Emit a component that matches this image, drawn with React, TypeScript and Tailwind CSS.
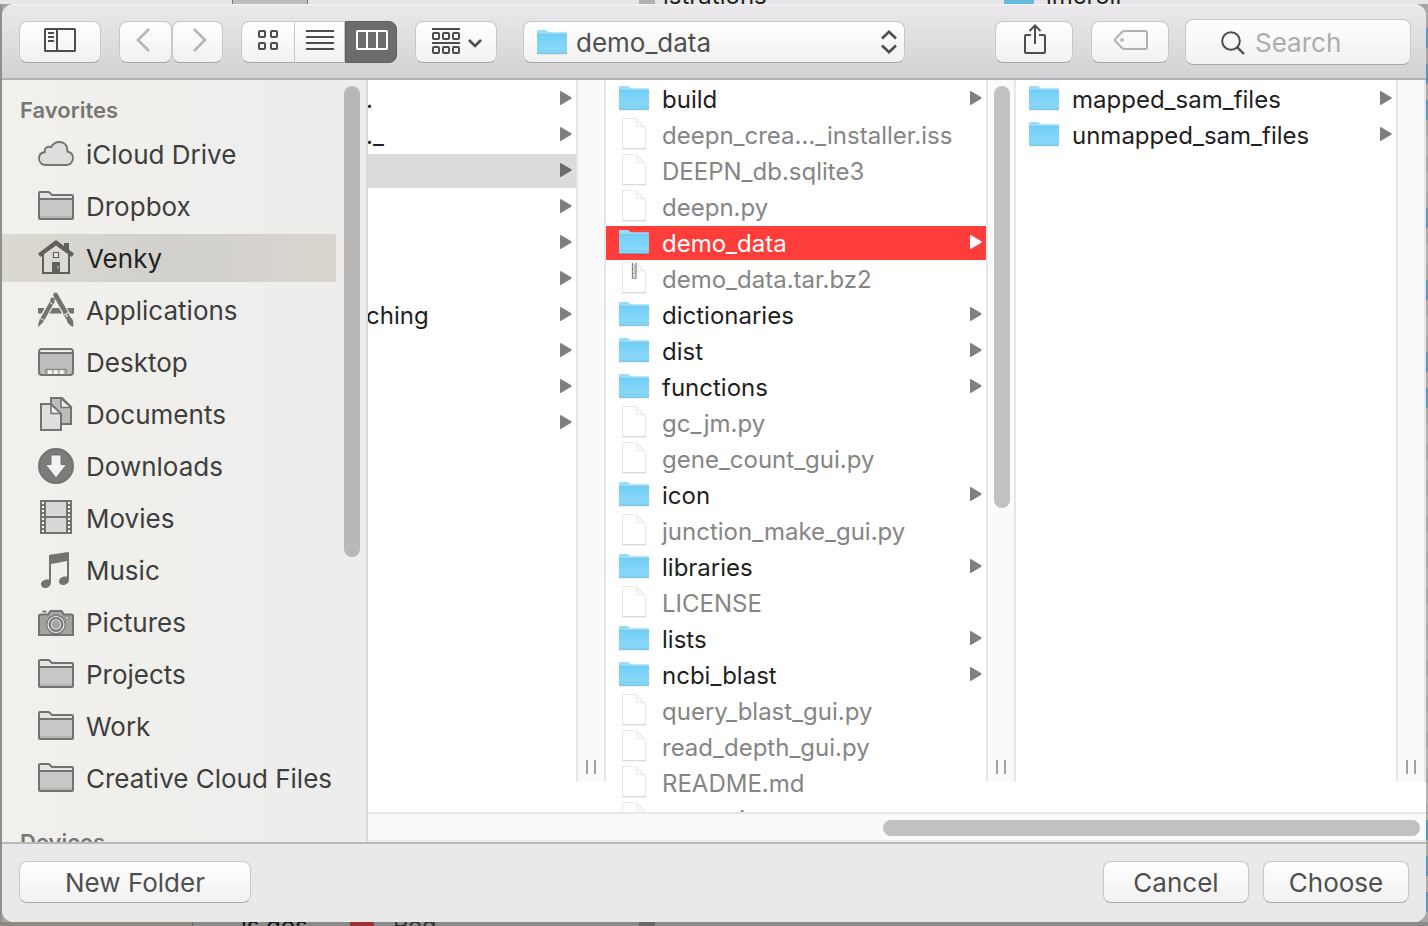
import type { ReactNode } from "react";

type Entry = { name: string; kind: "folder" | "file" | "archive"; selected?: boolean };

const projectEntries: Entry[] = [
  { name: "build", kind: "folder" },
  { name: "deepn_crea…_installer.iss", kind: "file" },
  { name: "DEEPN_db.sqlite3", kind: "file" },
  { name: "deepn.py", kind: "file" },
  { name: "demo_data", kind: "folder", selected: true },
  { name: "demo_data.tar.bz2", kind: "archive" },
  { name: "dictionaries", kind: "folder" },
  { name: "dist", kind: "folder" },
  { name: "functions", kind: "folder" },
  { name: "gc_jm.py", kind: "file" },
  { name: "gene_count_gui.py", kind: "file" },
  { name: "icon", kind: "folder" },
  { name: "junction_make_gui.py", kind: "file" },
  { name: "libraries", kind: "folder" },
  { name: "LICENSE", kind: "file" },
  { name: "lists", kind: "folder" },
  { name: "ncbi_blast", kind: "folder" },
  { name: "query_blast_gui.py", kind: "file" },
  { name: "read_depth_gui.py", kind: "file" },
  { name: "README.md", kind: "file" },
  { name: "run_gui.py", kind: "file" },
];

const demoEntries: Entry[] = [
  { name: "mapped_sam_files", kind: "folder" },
  { name: "unmapped_sam_files", kind: "folder" },
];

const parentEntries = [".", "._", "", "", "", "", "ching", "", "", ""];

function BlueFolder() {
  return (
    <svg viewBox="0 0 30 26" className="h-[26px] w-[30px] shrink-0" aria-hidden="true">
      <defs>
        <linearGradient id="folderFront" x1="0" y1="0" x2="0" y2="1">
          <stop offset="0" stopColor="#74d0f7" />
          <stop offset="1" stopColor="#8edafa" />
        </linearGradient>
      </defs>
      <path d="M0 24.6h30v.9H0z" fill="#000" opacity=".12" />
      <path d="M0 2Q0 1 1 1H8.5Q9.5 1 10.3 2L11.5 3.2H29Q30 3.2 30 4.2V24H0Z" fill="#97dcf9" />
      <path d="M0 6H30V23.5Q30 24.5 29 24.5H1Q0 24.5 0 23.5Z" fill="url(#folderFront)" />
      <path d="M0 5.6H30" stroke="#62bfe8" strokeWidth=".8" />
      <path d="M0 21.6H30" stroke="#6fc6ec" strokeWidth=".6" />
      <path d="M0 24.2H30" stroke="#62b4d8" strokeWidth=".9" />
    </svg>
  );
}

function PaperFile({ zip }: { zip?: boolean }) {
  return (
    <svg viewBox="0 0 30 34" className="h-[34px] w-[30px] shrink-0" aria-hidden="true">
      <path
        d="M3.5 1.5H15.5Q17.5 1.5 19 3L25 9.5Q26.5 11 26.5 13V31.5H3.5Z"
        fill="#fff"
        stroke="#e6e6e6"
      />
      <path d="M3 31.8H27" stroke="#d6d6d6" />
      <path d="M17.5 2.2V9.5H25Z" fill="#fbfbfb" stroke="#e6e6e6" strokeWidth=".9" />
      {zip && (
        <g fill="none" stroke="#7d8280" strokeWidth="1.1">
          <path d="M13.4 2V17.3H17V2" />
          <path d="M13.5 4H15.5M15 6H17M13.5 8H15.5M15 10H17M13.5 12.2H17M14.6 15H16" />
        </g>
      )}
    </svg>
  );
}

function Disclosure({ color }: { color: string }) {
  return (
    <svg viewBox="0 0 12 14" className="mb-0.5 ml-auto h-[14px] w-3 shrink-0" fill={color} aria-hidden="true">
      <path d="M0 .8Q0-.4 1.2.2L11.3 6.3Q12 7 11.3 7.7L1.2 13.8Q0 14.4 0 13.2Z" />
    </svg>
  );
}

function Column({ entries, className }: { entries: Entry[]; className: string }) {
  return (
    <ul className={`flex flex-col gap-0.5 overflow-hidden bg-white pt-0.5 ${className}`}>
      {entries.map((e) => {
        const tone = e.selected
          ? "bg-[#ff3d3a] text-white"
          : e.kind === "folder"
            ? "text-[#1f1f1f]"
            : "text-[#858585]";
        return (
          <li key={e.name} className="shrink-0">
            <button className={`flex h-[34px] w-full items-center gap-[13px] pr-1 pl-[13px] text-left text-2xl ${tone}`}>
              <span className="mb-0.5 shrink-0">
                {e.kind === "folder" ? <BlueFolder /> : <PaperFile zip={e.kind === "archive"} />}
              </span>
              <span className="mt-0.5 whitespace-nowrap">{e.name}</span>
              {e.kind === "folder" && <Disclosure color={e.selected ? "#fff" : "#7f7f7f"} />}
            </button>
          </li>
        );
      })}
    </ul>
  );
}

function Gutter({ scroll }: { scroll?: boolean }) {
  return (
    <div className="mb-[30px] flex w-[30px] shrink-0 flex-col items-center border-x-2 border-[#e7e7e7] bg-[#fafafa] pt-1.5 pb-2">
      {scroll && <div className="ml-0.5 h-[422px] w-4 rounded-full bg-[#c1c1c1]" />}
      <div className="mt-auto flex h-[14px] w-[10px] justify-between">
        <span className="w-0.5 bg-[#a2a2a2]" />
        <span className="w-0.5 bg-[#a2a2a2]" />
      </div>
    </div>
  );
}

const ink = "#737371";

function GreyFolder() {
  return (
    <>
      <path d="M1 30V5Q1 4 2 4H10Q11.3 4 12 5L14 7H34Q35 7 35 8V30Q35 31 34 31H2Q1 31 1 30Z" fill="#e4e4e2" stroke={ink} strokeWidth="2" />
      <path d="M2 11.5H34V30H2Z" fill="#c8c8c6" />
      <path d="M1 11H35" stroke={ink} strokeWidth="2" />
      <path d="M2 28.8H34" stroke="#b3b3b1" strokeWidth="2" />
    </>
  );
}

const places: { name: string; icon: ReactNode; selected?: boolean }[] = [
  {
    name: "iCloud Drive",
    icon: (
      <path
        d="M8 29C3.5 29 1 26 1 22.5 1 19 3.5 16.5 6.8 16 6 12.5 9.5 9.5 13 11.3 15 7.5 18 6 21.3 6 26.5 6 30 10 29.3 15.5 33 16.3 35 19 35 22.3 35 26 32 29 28.3 29Z"
        fill="#dededc"
        stroke={ink}
        strokeWidth="1.8"
      />
    ),
  },
  { name: "Dropbox", icon: <GreyFolder /> },
  {
    name: "Venky",
    selected: true,
    icon: (
      <>
        <path d="M26 3H31V12L26 8Z" fill="#625f58" />
        <path d="M5 13V33H31V13L18 3Z" fill="#dcdad5" stroke="#625f58" strokeWidth="2" />
        <path d="M18 0L0 13.5 2.2 17 18 5.4 33.8 17 36 13.5Z" fill="#625f58" />
        <path d="M15.5 12.5H20.5V17.5H15.5Z" fill="#eceae5" stroke="#625f58" strokeWidth="1.2" />
        <path d="M14 22H22V34H14Z" fill="#625f58" />
        <path d="M20 26V28.5" stroke="#dcdad5" />
      </>
    ),
  },
  {
    name: "Applications",
    icon: (
      <>
        <path d="M0 16H6.5L3.6 21.5H0ZM14.5 16H21L24 21.5H11.5ZM29 16H36V21.5H32Z" fill={ink} />
        <path d="M15 8.5L4.5 27" stroke={ink} strokeWidth="4.4" />
        <path d="M11.8 10.4L16.5 13.2" stroke="#efefed" />
        <circle cx="14.6" cy="7.6" r="2.2" fill={ink} />
        <path d="M2 26.5L6.2 29 .4 35 .2 32Z" fill={ink} />
        <path d="M17.6 3L28.2 21.5" stroke={ink} strokeWidth="4.6" strokeLinecap="round" />
        <path d="M27 21L31 27" stroke={ink} strokeWidth="4.6" />
        <path d="M25.5 23.4L30.5 20.5" stroke="#efefed" strokeWidth="1.2" />
        <circle cx="28.9" cy="24" r="1" fill="#efefed" />
        <path d="M28.7 28.5Q31 24.7 34 26.5 36 29.5 35.2 35 30 32.8 28.7 28.5Z" fill={ink} />
      </>
    ),
  },
  {
    name: "Desktop",
    icon: (
      <>
        <rect x="1" y="5" width="34" height="26" rx="3" fill="#bdbdbb" stroke={ink} strokeWidth="2" />
        <path d="M2.5 6.3H33.5V8H2.5Z" fill="#f4f4f2" />
        <path d="M1 9H35" stroke={ink} strokeWidth="1.8" />
        <path d="M8 31V25.5H28V31" fill="none" stroke="#8c8c8a" strokeWidth="1.4" />
        <path d="M10 26.3H13.6V30H10ZM16 26.3H19.6V30H16ZM22 26.3H25.6V30H22Z" fill="#f7f7f5" />
      </>
    ),
  },
  {
    name: "Documents",
    icon: (
      <>
        <path d="M13 2H24L33 11V28H13Z" fill="#bcbcba" stroke={ink} strokeWidth="2" />
        <path d="M23 2.5V11.5H33Z" fill="#f0f0ee" stroke={ink} strokeWidth="1.6" />
        <path d="M3 8H13L23 18V34H3Z" fill="#dededc" stroke={ink} strokeWidth="2" />
        <path d="M13 8.5V17.5H22.5Z" fill="#f0f0ee" stroke={ink} strokeWidth="1.6" />
      </>
    ),
  },
  {
    name: "Downloads",
    icon: (
      <>
        <circle cx="18" cy="18" r="17" fill="#7c7c7a" stroke={ink} strokeWidth="2" />
        <path d="M13 7H23V16.5H28.5L18 30 7.5 16.5H13Z" fill="#f3f3f1" stroke={ink} strokeWidth="1" />
      </>
    ),
  },
  {
    name: "Movies",
    icon: (
      <>
        <path d="M2 0H34V34H2Z" fill={ink} />
        <path d="M8 2H28V16H8ZM8 18H28V32H8Z" fill="#d8d8d6" />
        <path d="M5 2V33M31 2V33" stroke="#f3f3f1" strokeWidth="2" strokeDasharray="2 2" />
      </>
    ),
  },
  {
    name: "Music",
    icon: (
      <path
        d="M11 4Q11 3 12 2.8L30 0Q31 0 31 1V27.5C31 30.5 28.5 33 25.3 33 22.5 33 21 31.3 21 29.2 21 26.2 25 24 29 24.6V9L13 12V30C13 33.5 10.5 36 7.2 36 4.5 36 3 34.2 3 32 3 29 7 27 11 27.6Z"
        fill={ink}
      />
    ),
  },
  {
    name: "Pictures",
    icon: (
      <>
        <path d="M4.5 7.5H8.5" stroke={ink} strokeWidth="1.8" />
        <path d="M1 12Q1 10.5 2.5 10.5H10L12.5 7H23.5L26 10.5H33.5Q35 10.5 35 12V31H1Z" fill="#a2a2a0" stroke={ink} strokeWidth="2" />
        <circle cx="18" cy="20.5" r="9.2" fill="#f0f0ee" stroke={ink} strokeWidth="1.2" />
        <circle cx="18" cy="20.5" r="6.4" fill="#d8d8d6" stroke={ink} strokeWidth="2" />
        <circle cx="18" cy="20.5" r="4.4" fill="#a6a6a4" />
        <circle cx="29" cy="13.8" r="1.7" fill="#e5e5e3" stroke={ink} />
      </>
    ),
  },
  { name: "Projects", icon: <GreyFolder /> },
  { name: "Work", icon: <GreyFolder /> },
  { name: "Creative Cloud Files", icon: <GreyFolder /> },
];

const face = "border border-[#c9c7c9] border-b-[#a9a7a9] bg-linear-to-b from-white to-[#f1f1f1]";

function ToolButton({ label, className, children }: { label: string; className: string; children: ReactNode }) {
  return (
    <button aria-label={label} className={`flex h-[42px] shrink-0 items-center justify-center ${className}`}>
      {children}
    </button>
  );
}

function Toolbar() {
  return (
    <header className="flex h-[76px] shrink-0 items-center border-t border-b-2 border-t-[#f5f4f5] border-b-[#b2b0b2] bg-linear-to-b from-[#ebe9ec] to-[#d3d1d4] pr-[15px] pl-[17px]">
      <ToolButton label="Toggle sidebar" className={`w-[82px] rounded-lg ${face}`}>
        <svg viewBox="0 0 32 24" className="-mt-1 h-6 w-8" fill="none" stroke="#4d4d4d" strokeWidth="2">
          <rect x="1" y="1" width="30" height="22" rx=".6" />
          <path d="M13 1V23M4 5H10M4 9H10M4 13H10" />
        </svg>
      </ToolButton>
      <ToolButton label="Back" className={`ml-[18px] w-[53px] rounded-lg pr-1.5 ${face}`}>
        <svg viewBox="0 0 14 24" className="-mt-1 h-6 w-[14px]" fill="none" stroke="#b5b5b5" strokeWidth="2.6">
          <path d="M13 1L2 12 13 23" />
        </svg>
      </ToolButton>
      <ToolButton label="Forward" className={`w-[51px] rounded-lg pl-1 ${face}`}>
        <svg viewBox="0 0 14 24" className="-mt-1 h-6 w-[14px]" fill="none" stroke="#b5b5b5" strokeWidth="2.6">
          <path d="M1 1L12 12 1 23" />
        </svg>
      </ToolButton>
      <div className="ml-[18px] flex shrink-0">
        <ToolButton label="Icon view" className={`w-[54px] rounded-l-lg ${face}`}>
          <svg viewBox="0 0 20 20" className="-mt-1 h-5 w-5" fill="none" stroke="#4d4d4d" strokeWidth="2">
            <rect x="1" y="1" width="6" height="6" rx="1" />
            <rect x="13" y="1" width="6" height="6" rx="1" />
            <rect x="1" y="13" width="6" height="6" rx="1" />
            <rect x="13" y="13" width="6" height="6" rx="1" />
          </svg>
        </ToolButton>
        <ToolButton label="List view" className={`w-[50px] border-l-0 ${face}`}>
          <svg viewBox="0 0 28 20" className="-mt-1 h-5 w-7" stroke="#4d4d4d" strokeWidth="2">
            <path d="M0 1H28M0 7H28M0 13H28M0 19H28" />
          </svg>
        </ToolButton>
        <ToolButton label="Column view" className="w-[52px] rounded-r-lg border border-[#5e5e5e] bg-[#6c6c6c] pl-0.5">
          <svg viewBox="0 0 32 20" className="-mt-1 h-5 w-8" fill="none" stroke="#fff" strokeWidth="2">
            <rect x="1" y="1" width="30" height="18" rx="1" />
            <path d="M11 1V19M21 1V19" />
          </svg>
        </ToolButton>
      </div>
      <ToolButton label="Arrange" className={`ml-[18px] w-[82px] gap-2 rounded-lg pl-0.5 ${face}`}>
        <svg viewBox="0 0 28 26" className="-mt-0.5 h-[26px] w-7" fill="none" stroke="#4d4d4d" strokeWidth="2">
          <path d="M0 1H28M0 15H28" />
          <rect x="1" y="5" width="6" height="6" rx="1" />
          <rect x="11" y="5" width="6" height="6" rx="1" />
          <rect x="21" y="5" width="6" height="6" rx="1" />
          <rect x="1" y="19" width="6" height="6" rx="1" />
          <rect x="11" y="19" width="6" height="6" rx="1" />
          <rect x="21" y="19" width="6" height="6" rx="1" />
        </svg>
        <svg viewBox="0 0 14 9" className="mt-1 h-[9px] w-[14px]" fill="none" stroke="#4d4d4d" strokeWidth="2.6">
          <path d="M1 1L7 7 13 1" />
        </svg>
      </ToolButton>
      <div className="relative mr-[90px] ml-[26px] min-w-0 flex-1">
        <select
          aria-label="Current folder"
          className={`block h-[42px] w-full appearance-none rounded-lg pt-0.5 pl-[52px] text-[26px] leading-8 text-[#4f4f4f] ${face}`}
        >
          <option>demo_data</option>
        </select>
        <span className="pointer-events-none absolute inset-y-0 left-[14px] flex items-center">
          <BlueFolder />
        </span>
        <span className="pointer-events-none absolute inset-y-0 right-2 flex items-center">
          <svg viewBox="0 0 16 24" className="h-6 w-4" fill="none" stroke="#4d4d4d" strokeWidth="2.6">
            <path d="M1 8.5L8 1.8 15 8.5M1 15.5L8 22.2 15 15.5" />
          </svg>
        </span>
      </div>
      <ToolButton label="Share" className={`w-[78px] rounded-lg pl-0.5 ${face}`}>
        <svg viewBox="0 0 22 30" className="-mt-1.5 h-[30px] w-[22px]" fill="none" stroke="#4d4d4d" strokeWidth="2">
          <path d="M7 11H2Q1 11 1 12V28Q1 29 2 29H20Q21 29 21 28V12Q21 11 20 11H15M11 20V1.5M5.5 7L11 1.5 16.5 7" />
        </svg>
      </ToolButton>
      <ToolButton label="Edit tags" className={`ml-[18px] w-[78px] rounded-lg pl-0.5 ${face}`}>
        <svg viewBox="0 0 34 20" className="-mt-1 h-5 w-[34px]" fill="none" stroke="#b0b0b0" strokeWidth="2">
          <path d="M10.5 1H31Q33 1 33 3V17Q33 19 31 19H10.5Q9 19 8 18L1.6 11.4Q.4 10 1.6 8.6L8 2Q9 1 10.5 1Z" />
          <circle cx="8" cy="10" r="1.8" fill="#b0b0b0" stroke="none" />
        </svg>
      </ToolButton>
      <label className={`ml-4 flex h-[46px] w-[226px] shrink-0 items-center gap-[10px] rounded-lg pt-0.5 pl-[35px] ${face}`}>
        <svg viewBox="0 0 24 24" className="h-6 w-6 shrink-0" fill="none" stroke="#4d4d4d" strokeWidth="2">
          <circle cx="10" cy="10" r="8.8" />
          <path d="M16.3 16.3L23 23" strokeWidth="2.4" />
        </svg>
        <input
          type="search"
          aria-label="Search"
          placeholder="Search"
          className="w-full min-w-0 bg-transparent text-[26px] leading-8 outline-none placeholder:text-[#adadad]"
        />
      </label>
    </header>
  );
}

function Sidebar() {
  return (
    <nav
      aria-label="Sidebar"
      className="relative flex w-[366px] shrink-0 flex-col overflow-hidden border-r-2 border-[#dadad7] bg-linear-to-r from-[#f1f0ec] to-[#ededec]"
    >
      <h2 className="mt-4 mb-1.5 shrink-0 pl-[18px] text-[22px] leading-7 font-semibold text-[#777775]">Favorites</h2>
      <ul className="flex w-[334px] shrink-0 flex-col gap-1">
        {places.map((p) => (
          <li key={p.name}>
            <button
              className={`flex h-12 w-full items-center gap-3 pl-9 text-left text-[26px] ${
                p.selected
                  ? "bg-linear-to-r from-[#dcd9d2] via-[#d1d0cc] to-[#dad5cf] text-[#22221f]"
                  : "text-[#3e3e3d]"
              }`}
            >
              <svg viewBox="0 0 36 36" className="h-9 w-9 shrink-0" fill="none" aria-hidden="true">
                {p.icon}
              </svg>
              <span className="whitespace-nowrap">{p.name}</span>
            </button>
          </li>
        ))}
      </ul>
      <h2 className="mt-[26px] shrink-0 pl-[18px] text-[22px] leading-7 font-semibold text-[#777775]">Devices</h2>
      <div className="absolute top-1.5 right-1.5 h-[471px] w-4 rounded-full bg-[#b9b8b6]" />
    </nav>
  );
}

function ParentColumn() {
  return (
    <ul className="flex w-52 shrink-0 flex-col gap-0.5 overflow-hidden bg-white pt-0.5">
      {parentEntries.map((name, i) => (
        <li key={i} className="shrink-0">
          <button
            aria-label={name || "Folder"}
            className={`flex h-[34px] w-full items-center pr-1 text-2xl text-[#1f1f1f] ${i === 2 ? "bg-[#dcdcdc]" : ""}`}
          >
            <span className="mt-0.5 -ml-0.5">{name}</span>
            <Disclosure color={i === 2 ? "#6c6c6c" : "#7f7f7f"} />
          </button>
        </li>
      ))}
    </ul>
  );
}

function BackdropTop() {
  return (
    <div className="flex h-1 shrink-0 overflow-hidden bg-[#e6e6e6] text-2xl leading-4 text-[#222]">
      <span className="ml-[232px] w-[76px] shrink-0 border-x border-[#777] bg-[#bdbdbd]" />
      <span className="ml-[331px] w-4 shrink-0 bg-[#b0b0b0]" />
      <span className="-mt-3 ml-2 w-[341px] shrink-0">istrations</span>
      <span className="w-[30px] shrink-0 bg-[#65b9dc]" />
      <span className="-mt-3 ml-3">imcroll</span>
    </div>
  );
}

function BackdropBottom() {
  return (
    <div className="flex h-1 shrink-0 overflow-hidden bg-[#8b8a8a] text-2xl leading-4 text-[#111]">
      <span className="w-[193px] shrink-0 border-r border-[#666] bg-[#8e8b84]" />
      <span className="-mt-1 ml-12 w-[109px] shrink-0">is des</span>
      <span className="w-6 shrink-0 bg-[#a03030]" />
      <span className="-mt-1 ml-[19px] w-[246px] shrink-0 text-[#333]">Red</span>
      <span className="w-4 shrink-0 bg-[#666]" />
    </div>
  );
}

const edgeCells = [1, 1, 1, 0, 0, 1, 0, 1, 0, 1, 1, 0, 0, 0, 0, 0, 0, 0, 0, 0, 0, 0, 1, 1, 1];

export default function App() {
  return (
    <div className="flex h-screen flex-col overflow-hidden bg-[#a5a5a5] font-['Inter','Liberation_Sans',sans-serif]">
      <BackdropTop />
      <div className="flex min-h-0 flex-1">
        <div className="w-0.5 shrink-0 bg-[#8f8f90]" />
        <main className="flex min-w-0 flex-1 flex-col overflow-hidden rounded-xl bg-white">
          <Toolbar />
          <div className="flex min-h-0 flex-1">
            <Sidebar />
            <section aria-label="Files" className="flex min-w-0 flex-1 flex-col">
              <div className="flex min-h-0 flex-1">
                <ParentColumn />
                <Gutter />
                <Column entries={projectEntries} className="w-[380px] shrink-0" />
                <Gutter scroll />
                <Column entries={demoEntries} className="min-w-0 flex-1" />
                <Gutter />
              </div>
              <div className="flex h-[30px] shrink-0 items-center justify-end border-y-2 border-[#e7e7e7] bg-[#fafafa] pt-0.5 pr-1.5">
                <div className="h-4 w-[537px] rounded-full bg-[#c1c1c1]" />
              </div>
            </section>
          </div>
          <footer className="flex h-20 shrink-0 items-center border-t-2 border-[#bababa] bg-[#e9e9e9] px-[17px] pb-0.5 text-[26px] text-[#4f4f4f]">
            <button className={`h-[42px] w-[232px] rounded-lg pt-0.5 leading-8 ${face}`}>New Folder</button>
            <button className={`ml-auto h-[42px] w-[146px] rounded-lg pt-0.5 leading-8 ${face}`}>Cancel</button>
            <button className={`ml-[14px] h-[42px] w-[146px] rounded-lg pt-0.5 leading-8 ${face}`}>Choose</button>
          </footer>
        </main>
        <div className="flex w-0.5 shrink-0 flex-col gap-4 overflow-hidden bg-[#a9a9a9] pt-6">
          {edgeCells.map((on, i) => (
            <span key={i} className={`h-5 shrink-0 ${on ? "bg-[#4f9bb8]" : "bg-[#b5b5b5]"}`} />
          ))}
        </div>
      </div>
      <BackdropBottom />
    </div>
  );
}
